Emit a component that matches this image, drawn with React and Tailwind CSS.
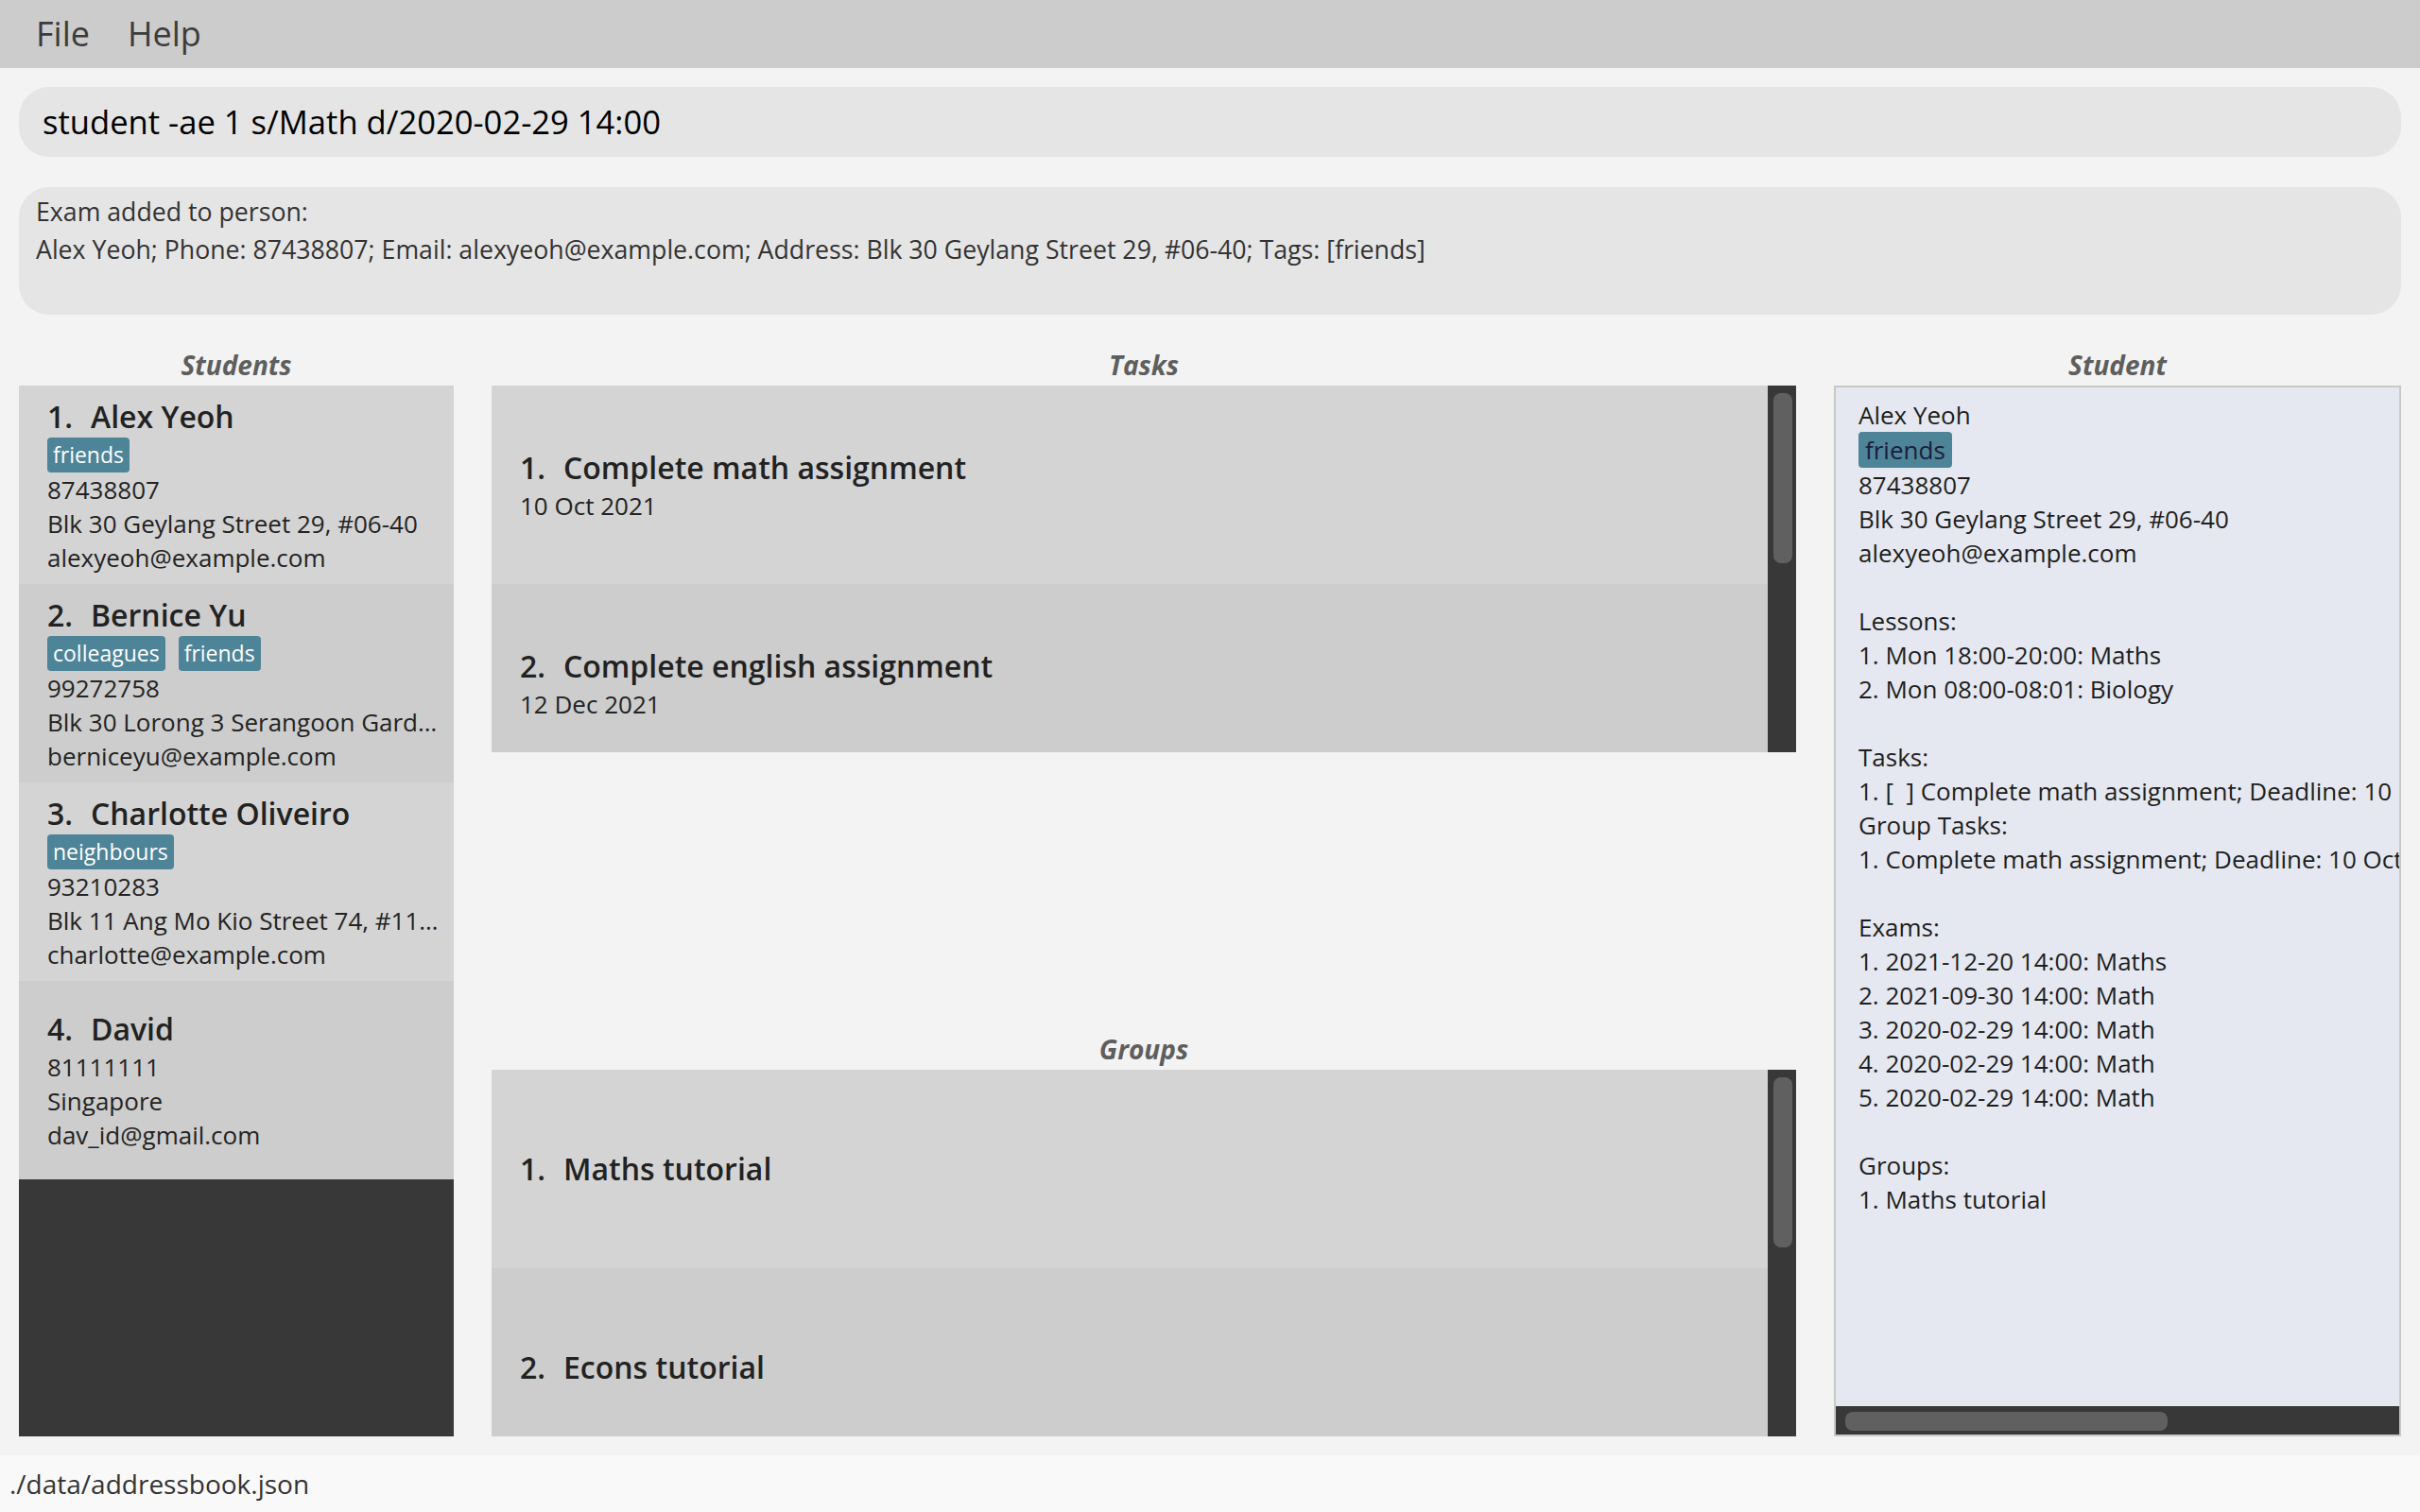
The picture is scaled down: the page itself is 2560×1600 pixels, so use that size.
import React from "react";

const students = [
  { name: "Alex Yeoh", tags: ["friends"], phone: "87438807", address: "Blk 30 Geylang Street 29, #06-40", email: "alexyeoh@example.com" },
  { name: "Bernice Yu", tags: ["colleagues", "friends"], phone: "99272758", address: "Blk 30 Lorong 3 Serangoon Gardens, #07-18", email: "berniceyu@example.com" },
  { name: "Charlotte Oliveiro", tags: ["neighbours"], phone: "93210283", address: "Blk 11 Ang Mo Kio Street 74, #11-04", email: "charlotte@example.com" },
  { name: "David", tags: [], phone: "81111111", address: "Singapore", email: "dav_id@gmail.com" },
];

const tasks = [
  { title: "Complete math assignment", date: "10 Oct 2021" },
  { title: "Complete english assignment", date: "12 Dec 2021" },
];

const groups = ["Maths tutorial", "Econs tutorial"];

const detailLines = [
  "87438807",
  "Blk 30 Geylang Street 29, #06-40",
  "alexyeoh@example.com",
  "",
  "Lessons:",
  "1. Mon 18:00-20:00: Maths",
  "2. Mon 08:00-08:01: Biology",
  "",
  "Tasks:",
  "1. [  ] Complete math assignment; Deadline: 10 Oct 2021",
  "Group Tasks:",
  "1. Complete math assignment; Deadline: 10 Oct 2021",
  "",
  "Exams:",
  "1. 2021-12-20 14:00: Maths",
  "2. 2021-09-30 14:00: Math",
  "3. 2020-02-29 14:00: Math",
  "4. 2020-02-29 14:00: Math",
  "5. 2020-02-29 14:00: Math",
  "",
  "Groups:",
  "1. Maths tutorial",
];

function Heading({ children }) {
  return (
    <div className="h-[38px] shrink-0 leading-[32px] text-center text-[28px] italic font-bold text-[#5e5e5e]">
      {children}
    </div>
  );
}

function Tag({ children }) {
  return (
    <span className="h-[37px] px-[6px] rounded-[4px] bg-[#4e8497] text-white text-[23px] leading-[37px] whitespace-nowrap">
      {children}
    </span>
  );
}

function Title({ index, text }) {
  return (
    <div className="h-[44px] leading-[44px] text-[32px] font-semibold text-[#222222] whitespace-nowrap flex">
      <span className="w-[46px] shrink-0">{index}.</span>
      <span>{text}</span>
    </div>
  );
}

function StudentCard({ s, i }) {
  return (
    <div
      className={`h-[210px] shrink-0 flex flex-col justify-center pl-[30px] pr-[15px] ${
        i % 2 === 0 ? "bg-[#d4d4d4]" : "bg-[#cdcdcd]"
      }`}
    >
      <Title index={i + 1} text={s.name} />
      {s.tags.length > 0 && (
        <div className="flex gap-[14px] h-[37px]">
          {s.tags.map((t) => (
            <Tag key={t}>{t}</Tag>
          ))}
        </div>
      )}
      <div className="text-[26px] leading-[36px] text-[#232323]">
        <div className="truncate">{s.phone}</div>
        <div className="truncate">{s.address}</div>
        <div className="truncate">{s.email}</div>
      </div>
    </div>
  );
}

function ScrollTrack() {
  return (
    <div className="w-[30px] shrink-0 bg-[#383838] pt-[8px] pl-[6px]">
      <div className="w-[20px] h-[180px] rounded-[8px] bg-[#606060]" />
    </div>
  );
}

export default function App() {
  return (
    <div className="w-[2560px] h-[1600px] flex flex-col bg-[#f3f3f3] font-['Open_Sans',sans-serif] overflow-hidden">
      {/* Menu bar */}
      <div className="h-[72px] shrink-0 bg-[#cccccc] flex items-center pl-[38px] gap-[40px] text-[36px] leading-none text-[#3c3c3c]">
        <span>File</span>
        <span>Help</span>
      </div>

      {/* Command box */}
      <div className="mt-[20px] mx-[20px] h-[74px] shrink-0 rounded-[32px] bg-[#e5e5e5] flex items-center pl-[25px] text-[34.6px] leading-none text-black whitespace-nowrap">
        student -ae 1 s/Math d/2020-02-29 14:00
      </div>

      {/* Result box */}
      <div className="mt-[32px] mx-[20px] h-[135px] shrink-0 rounded-[32px] bg-[#e5e5e5] pl-[18px] pt-[6px] text-[26.7px] leading-[40px] text-[#333333]">
        <div>Exam added to person:</div>
        <div className="whitespace-nowrap">
          Alex Yeoh; Phone: 87438807; Email: alexyeoh@example.com; Address: Blk 30 Geylang Street 29, #06-40; Tags: [friends]
        </div>
      </div>

      {/* Main */}
      <div className="flex-1 min-h-0 pt-[37px] pb-[20px] px-[20px] flex gap-[40px]">
        {/* Students */}
        <div className="w-[460px] shrink-0 flex flex-col">
          <Heading>Students</Heading>
          <div className="flex-1 bg-[#383838] flex flex-col overflow-hidden">
            {students.map((s, i) => (
              <StudentCard key={s.name} s={s} i={i} />
            ))}
          </div>
        </div>

        {/* Tasks & Groups */}
        <div className="flex-1 flex flex-col justify-between">
          <div className="flex flex-col">
            <Heading>Tasks</Heading>
            <div className="h-[388px] flex">
              <div className="flex-1 overflow-hidden flex flex-col">
                {tasks.map((t, i) => (
                  <div
                    key={t.title}
                    className={`h-[210px] shrink-0 flex flex-col justify-center pl-[30px] ${
                      i % 2 === 0 ? "bg-[#d4d4d4]" : "bg-[#cdcdcd]"
                    }`}
                  >
                    <Title index={i + 1} text={t.title} />
                    <div className="text-[26px] leading-[36px] text-[#232323]">{t.date}</div>
                  </div>
                ))}
              </div>
              <ScrollTrack />
            </div>
          </div>
          <div className="flex flex-col">
            <Heading>Groups</Heading>
            <div className="h-[388px] flex">
              <div className="flex-1 overflow-hidden flex flex-col">
                {groups.map((g, i) => (
                  <div
                    key={g}
                    className={`h-[210px] shrink-0 flex flex-col justify-center pl-[30px] ${
                      i % 2 === 0 ? "bg-[#d4d4d4]" : "bg-[#cdcdcd]"
                    }`}
                  >
                    <Title index={i + 1} text={g} />
                  </div>
                ))}
              </div>
              <ScrollTrack />
            </div>
          </div>
        </div>

        {/* Student detail */}
        <div className="w-[600px] shrink-0 flex flex-col">
          <Heading>Student</Heading>
          <div className="flex-1 min-h-0 border-2 border-[#c8c8c8] bg-[#e5e8f0] flex flex-col">
            <div className="flex-1 min-h-0 overflow-hidden pt-[11px] pl-[24px] text-[26px] leading-[36px] text-[#1e1e1e] whitespace-pre">
              <div>Alex Yeoh</div>
              <div className="h-[38px] flex">
                <span className="h-[38px] px-[7px] rounded-[4px] bg-[#4e8497] text-[#1c1c3c] text-[26px] leading-[38px]">
                  friends
                </span>
              </div>
              {detailLines.map((l, i) => (
                <div key={i} className="h-[36px]">
                  {l}
                </div>
              ))}
            </div>
            <div className="h-[30px] shrink-0 bg-[#383838] pt-[6px] pl-[10px]">
              <div className="w-[341px] h-[20px] rounded-[8px] bg-[#606060]" />
            </div>
          </div>
        </div>
      </div>

      {/* Status bar */}
      <div className="h-[60px] shrink-0 bg-[#f9f9f9] flex items-center pl-[10px] text-[28px] leading-none text-[#333333]">
        ./data/addressbook.json
      </div>
    </div>
  );
}
